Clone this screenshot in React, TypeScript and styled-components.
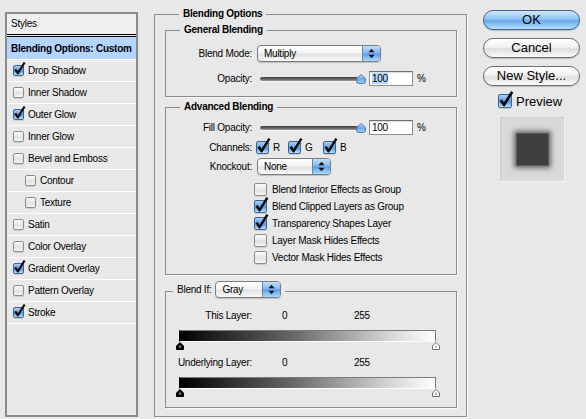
import React from 'react';
import styled, { createGlobalStyle } from 'styled-components';

const GlobalStyle = createGlobalStyle`
  html, body {
    margin: 0;
    padding: 0;
    background: #e8e8e8;
  }
  body {
    font-family: 'Liberation Sans', Arial, sans-serif;
    font-size: 10px;
    letter-spacing: -0.25px;
    color: #000;
  }
`;

const styleRows = [
  { label: 'Drop Shadow', on: true },
  { label: 'Inner Shadow' },
  { label: 'Outer Glow', on: true },
  { label: 'Inner Glow' },
  { label: 'Bevel and Emboss' },
  { label: 'Contour', sub: true },
  { label: 'Texture', sub: true },
  { label: 'Satin' },
  { label: 'Color Overlay' },
  { label: 'Gradient Overlay', on: true },
  { label: 'Pattern Overlay' },
  { label: 'Stroke', on: true },
];

const advancedOptions = [
  { label: 'Blend Interior Effects as Group' },
  { label: 'Blend Clipped Layers as Group', on: true },
  { label: 'Transparency Shapes Layer', on: true },
  { label: 'Layer Mask Hides Effects' },
  { label: 'Vector Mask Hides Effects' },
];

function useSvgId(prefix: string) {
  return prefix + React.useId().replace(/[^a-zA-Z0-9]/g, '');
}

function CheckBox({ on, size = 13 }: { on?: boolean; size?: number }) {
  return (
    <Box $size={size} $on={on}>
      {on && (
        <Tick width={size + 2} height={size + 4} viewBox="0 0 15 17">
          <path
            d="M2.6 9.6 L5.6 14.2 L13.4 1.6"
            fill="none"
            stroke="#0b0b0b"
            strokeWidth="2.5"
            strokeLinejoin="round"
          />
        </Tick>
      )}
    </Box>
  );
}

function Popup({ value, width }: { value: string; width: number }) {
  return (
    <PopupBox $w={width}>
      <PopupText>{value}</PopupText>
      <PopupArrows>
        <svg width="7" height="11" viewBox="0 0 7 11">
          <path d="M0.5 4.2 L3.5 0.8 L6.5 4.2 Z" fill="#111" />
          <path d="M0.5 6.8 L3.5 10.2 L6.5 6.8 Z" fill="#111" />
        </svg>
      </PopupArrows>
    </PopupBox>
  );
}

function SliderThumb() {
  const id = useSvgId('thumb');
  return (
    <svg width="10" height="10" viewBox="0 0 10 10">
      <defs>
        <linearGradient id={id} x1="0" y1="0" x2="0" y2="1">
          <stop offset="0" stopColor="#cfe6ff" />
          <stop offset="0.5" stopColor="#6aa5e6" />
          <stop offset="1" stopColor="#a9d6ff" />
        </linearGradient>
      </defs>
      <path
        d="M5 0.6 L9.4 4.6 V7.4 Q9.4 9.4 7.4 9.4 H2.6 Q0.6 9.4 0.6 7.4 V4.6 Z"
        fill={`url(#${id})`}
        stroke="#3f6a9e"
        strokeWidth="0.9"
      />
    </svg>
  );
}

function OpacitySlider() {
  return (
    <SliderWrap>
      <Track />
      <SliderThumb />
    </SliderWrap>
  );
}

function RampThumb({ dark }: { dark?: boolean }) {
  return (
    <svg width="8" height="8" viewBox="0 0 8 8">
      <path
        d="M4 0.5 L7.5 4 V7.5 H0.5 V4 Z"
        fill={dark ? '#000' : '#fff'}
        stroke={dark ? '#000' : '#707070'}
        strokeWidth="1"
      />
      <path d="M4 3.5 V5.8" stroke={dark ? '#fff' : '#707070'} strokeWidth="1" />
    </svg>
  );
}

function LayerRamp({ label }: { label: string }) {
  return (
    <>
      <LevelRow>
        <RampLabel>{label}</RampLabel>
        <span>0</span>
        <span>255</span>
      </LevelRow>
      <Ramp />
      <RampThumbs>
        <RampThumb dark />
        <RampThumb />
      </RampThumbs>
    </>
  );
}

export default function App() {
  return (
    <>
      <GlobalStyle />
      <Window>
        <StylesPanel>
          <PanelHeader>Styles</PanelHeader>
          <StyleItem $active>Blending Options: Custom</StyleItem>
          {styleRows.map((row) => (
            <StyleItem key={row.label} $sub={row.sub}>
              <CheckBox on={row.on} size={11} />
              {row.label}
            </StyleItem>
          ))}
        </StylesPanel>

        <MainGroup>
          <Caption>Blending Options</Caption>

          <Group $top={10} $pad="0 0 10px 0">
            <Caption>General Blending</Caption>
            <FieldRow $top={9} $h={17}>
              <FieldLabel>Blend Mode:</FieldLabel>
              <Popup value="Multiply" width={124} />
            </FieldRow>
            <FieldRow $top={9} $h={15}>
              <FieldLabel>Opacity:</FieldLabel>
              <OpacitySlider />
              <NumberField>
                <Selected>100</Selected>
              </NumberField>
              <Unit>%</Unit>
            </FieldRow>
          </Group>

          <Group $top={10} $pad="0 0 8px 0">
            <Caption>Advanced Blending</Caption>
            <FieldRow $top={7} $h={15}>
              <FieldLabel>Fill Opacity:</FieldLabel>
              <OpacitySlider />
              <NumberField>100</NumberField>
              <Unit>%</Unit>
            </FieldRow>
            <FieldRow $top={6} $h={13}>
              <FieldLabel>Channels:</FieldLabel>
              <Channels>
                <Channel>
                  <CheckBox on />R
                </Channel>
                <Channel>
                  <CheckBox on />G
                </Channel>
                <Channel>
                  <CheckBox on />B
                </Channel>
              </Channels>
            </FieldRow>
            <FieldRow $top={4} $h={17}>
              <FieldLabel>Knockout:</FieldLabel>
              <Popup value="None" width={74} />
            </FieldRow>
            <OptionList>
              {advancedOptions.map((opt) => (
                <OptionItem key={opt.label}>
                  <CheckBox on={opt.on} />
                  {opt.label}
                </OptionItem>
              ))}
            </OptionList>
          </Group>

          <Group $top={16} $pad="0 0 10px 0">
            <BlendIfCaption>
              Blend If:
              <Popup value="Gray" width={66} />
            </BlendIfCaption>
            <LayerRamp label="This Layer:" />
            <LayerRamp label="Underlying Layer:" />
          </Group>
        </MainGroup>

        <SideColumn>
          <AquaButton $primary>OK</AquaButton>
          <AquaButton>Cancel</AquaButton>
          <AquaButton>New Style...</AquaButton>
          <PreviewToggle>
            <CheckBox on size={14} />
            Preview
          </PreviewToggle>
          <Swatch>
            <SwatchShape />
          </Swatch>
        </SideColumn>
      </Window>
    </>
  );
}

const Window = styled.div`
  display: flex;
  align-items: flex-start;
  width: 586px;
  height: 419px;
  padding-left: 5px;
  box-sizing: border-box;
  overflow: hidden;
`;

/* left list of layer styles */

const StylesPanel = styled.div`
  width: 133px;
  height: 405px;
  margin-top: 12px;
  box-sizing: border-box;
  border: 2px solid #8a8a8a;
  background: #e9e9e9;
  flex: none;
`;

const PanelHeader = styled.div`
  height: 20px;
  line-height: 20px;
  padding-left: 4px;
  background: #efefef;
  border-bottom: 3px double #000;
`;

const StyleItem = styled.div<{ $active?: boolean; $sub?: boolean }>`
  display: flex;
  align-items: center;
  gap: 4px;
  height: ${(p) => (p.$active ? 22 : 21)}px;
  padding-left: ${(p) => (p.$active ? 4 : p.$sub ? 18 : 6)}px;
  border-bottom: 1px solid #fff;
  background: ${(p) => (p.$active ? '#b5d5ff' : 'transparent')};
  font-weight: ${(p) => (p.$active ? 'bold' : 'normal')};
`;

/* checkboxes */

const Box = styled.span<{ $size: number; $on?: boolean }>`
  position: relative;
  display: inline-block;
  flex: none;
  box-sizing: border-box;
  width: ${(p) => p.$size}px;
  height: ${(p) => p.$size}px;
  border-radius: 2px;
  border: 1px solid ${(p) => (p.$on ? '#3d6594' : '#8c8c8c')};
  background: ${(p) =>
    p.$on
      ? 'linear-gradient(#a9d0f6, #629fe2 50%, #4e90dc 51%, #b9e4ff)'
      : 'linear-gradient(#fbfbfb, #e6e6e6 50%, #dcdcdc 51%, #f7f7f7)'};
  box-shadow: 0 1px 1px rgba(0, 0, 0, 0.12);
`;

const Tick = styled.svg`
  position: absolute;
  left: -1px;
  top: -5px;
`;

/* group boxes */

const Group = styled.div<{ $top: number; $pad: string }>`
  box-sizing: border-box;
  margin-top: ${(p) => p.$top}px;
  padding: ${(p) => p.$pad};
  border: 1px solid #8b8b8b;
  box-shadow: 1px 1px 0 #fafafa;
`;

const MainGroup = styled(Group).attrs({ $top: 14, $pad: '0 9px 8px 10px' })`
  flex: none;
  width: 313px;
  margin-left: 16px;
`;

const Caption = styled.div`
  width: fit-content;
  margin: -7px 0 0 14px;
  padding: 0 4px;
  line-height: 12px;
  background: #e8e8e8;
  font-weight: bold;
`;

const BlendIfCaption = styled.div`
  display: flex;
  align-items: center;
  gap: 4px;
  width: fit-content;
  margin: -11px 0 0 7px;
  padding: 0 4px;
  background: #e8e8e8;
`;

const FieldRow = styled.div<{ $top: number; $h: number }>`
  display: flex;
  align-items: center;
  height: ${(p) => p.$h}px;
  margin-top: ${(p) => p.$top}px;
`;

const FieldLabel = styled.span`
  flex: none;
  width: 86px;
  margin-right: 5px;
  text-align: right;
`;

/* popup menus */

const PopupBox = styled.div<{ $w: number }>`
  display: flex;
  width: ${(p) => p.$w}px;
  height: 17px;
  box-sizing: border-box;
  border: 1px solid #7d7d7d;
  border-radius: 4px;
  overflow: hidden;
  background: linear-gradient(#ffffff, #f3f3f3 45%, #e2e2e2 55%, #f9f9f9);
  box-shadow: 0 1px 1px rgba(0, 0, 0, 0.18);
`;

const PopupText = styled.span`
  flex: 1;
  padding-left: 6px;
  line-height: 15px;
`;

const PopupArrows = styled.span`
  display: flex;
  align-items: center;
  justify-content: center;
  width: 17px;
  border-left: 1px solid #5b87bd;
  background: linear-gradient(#c4e0fb, #7db4ee 48%, #5d9ce4 52%, #a7dcff);
`;

/* sliders and number fields */

const SliderWrap = styled.div`
  display: flex;
  align-items: center;
  width: 106px;
  margin-left: 3px;
`;

const Track = styled.div`
  flex: 1;
  height: 4px;
  margin-right: -2px;
  border-radius: 2px;
  background: linear-gradient(#3a3a3a, #6d6d6d 60%, #9a9a9a);
  box-shadow: 0 1px 0 #fbfbfb;
`;

const NumberField = styled.span`
  box-sizing: border-box;
  width: 44px;
  height: 15px;
  margin-left: 3px;
  padding-left: 2px;
  line-height: 13px;
  background: #fff;
  border: 1px solid #8e8e8e;
  border-top-color: #6f6f6f;
  box-shadow: inset 0 1px 1px rgba(0, 0, 0, 0.15);
`;

const Selected = styled.span`
  background: #b5d5ff;
`;

const Unit = styled.span`
  margin-left: 4px;
`;

const Channels = styled.div`
  display: grid;
  grid-template-columns: 32px 35px auto;
  margin-left: -1px;
`;

const Channel = styled.span`
  display: flex;
  align-items: center;
  gap: 4px;
`;

const OptionList = styled.div`
  margin-top: 6px;
  padding-left: 88px;
`;

const OptionItem = styled.div`
  display: flex;
  align-items: center;
  gap: 5px;
  height: 17px;
`;

/* blend-if ramps */

const LevelRow = styled.div`
  display: grid;
  grid-template-columns: 116px 72px auto;
  height: 12px;
  line-height: 12px;
  margin-top: 12px;
`;

const RampLabel = styled.span`
  padding-right: 30px;
  text-align: right;
`;

const Ramp = styled.div`
  box-sizing: border-box;
  width: 257px;
  height: 12px;
  margin: 8px 0 0 13px;
  background: linear-gradient(to right, #000, #6a6a6a 45%, #d0d0d0 80%, #fff);
  border: 1px solid #7b7b7b;
  border-left-color: #000;
  border-bottom-color: #fdfdfd;
`;

const RampThumbs = styled.div`
  display: flex;
  justify-content: space-between;
  width: 264px;
  height: 8px;
  margin-left: 10px;

  & + ${LevelRow} {
    margin-top: 7px;
  }
`;

/* right column */

const SideColumn = styled.div`
  display: flex;
  flex-direction: column;
  gap: 8px;
  width: 97px;
  margin: 10px 0 0 16px;
  flex: none;
  font-size: 13px;
  letter-spacing: 0;
`;

const AquaButton = styled.button<{ $primary?: boolean }>`
  height: 20px;
  padding: 0;
  border-radius: 10px;
  border: 1px solid ${(p) => (p.$primary ? '#3e638f' : '#6e6e6e')};
  background: ${(p) =>
    p.$primary
      ? 'linear-gradient(#d2e8fd, #8ec2f4 45%, #6aa9ec 55%, #b4e2ff)'
      : 'linear-gradient(#ffffff, #f1f1f1 45%, #dedede 55%, #fbfbfb)'};
  box-shadow: 0 1px 1px rgba(0, 0, 0, 0.2);
  font-family: 'Liberation Sans', Arial, sans-serif;
  font-size: 13px;
  line-height: 18px;
  color: #000;
`;

const PreviewToggle = styled.label`
  display: flex;
  align-items: center;
  gap: 4px;
  height: 14px;
  padding-left: 15px;
`;

const Swatch = styled.div`
  display: flex;
  align-items: center;
  justify-content: center;
  box-sizing: border-box;
  width: 65px;
  height: 65px;
  margin: 1px 0 0 17px;
  background: #d9d9d9;
  border: 1px solid #f3f3f3;
  border-top-color: #cdcdcd;
  border-left-color: #cdcdcd;
`;

const SwatchShape = styled.div`
  width: 33px;
  height: 33px;
  box-sizing: border-box;
  background: #3e3e3e;
  border: 1px solid #5c5c5c;
  box-shadow: 0 0 5px 2px rgba(0, 0, 0, 0.55);
`;
